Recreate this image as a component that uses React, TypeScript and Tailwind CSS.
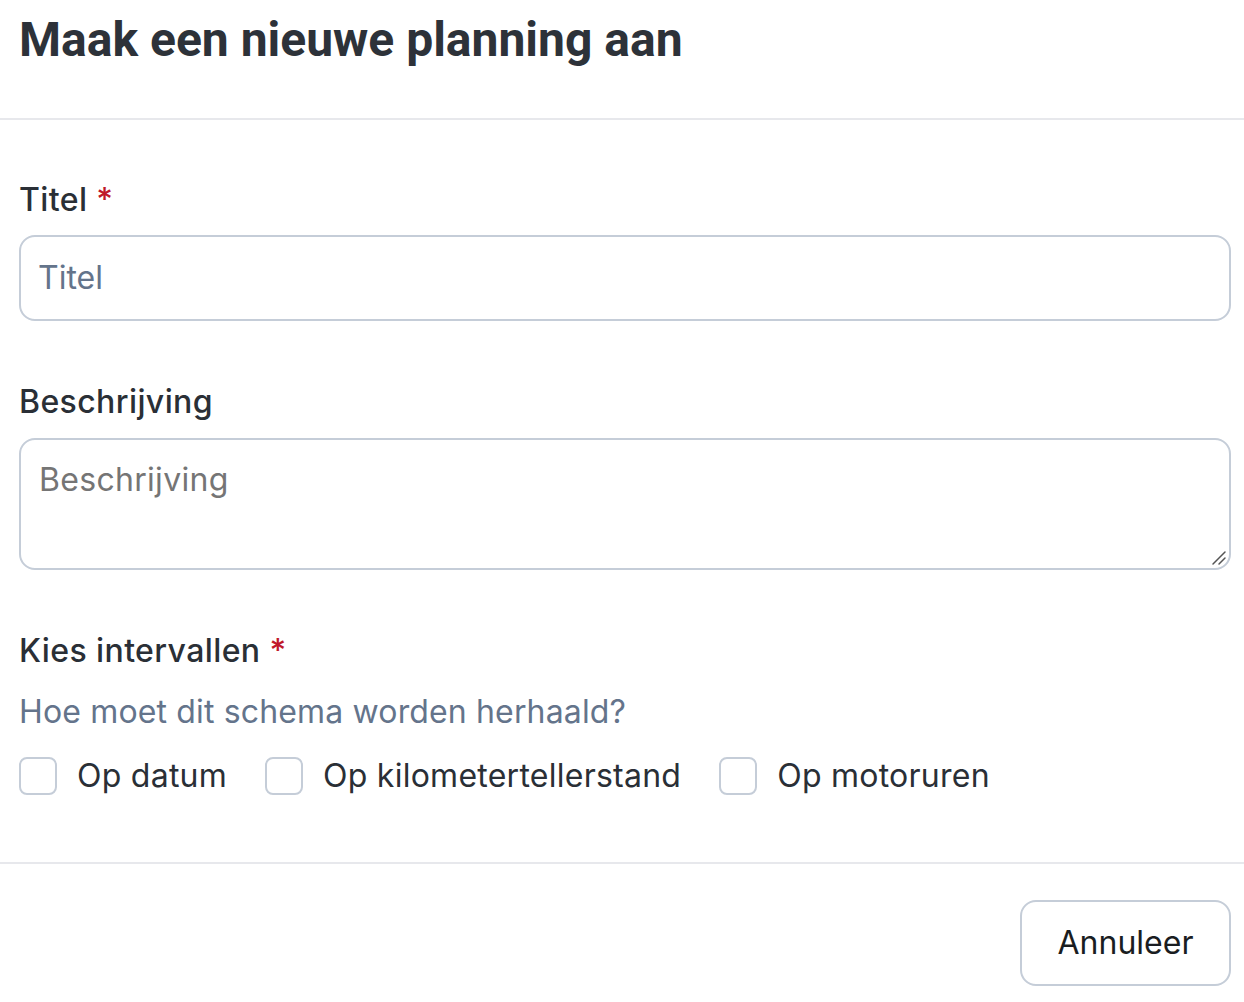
import React from 'react';

const Checkbox: React.FC<{ label: string }> = ({ label }) => (
  <label className="flex items-center gap-[20px]">
    <span className="block w-[38px] h-[38px] rounded-[8px] border-2 border-[#c5cdd8] bg-white" />
    <span className="text-[32px] leading-[40px] tracking-[0.25px] text-[#2a2f36]">{label}</span>
  </label>
);

export default function App() {
  return (
    <div className="w-[1244px] min-h-[1002px] bg-white font-['Inter','Liberation_Sans',sans-serif]">
      {/* HEADER */}
      <div className="pt-[12px] pb-[50px] pl-[19px] border-b-2 border-[#e7e8ec]">
        <h1 className="text-[48px] leading-[56px] font-bold text-[#2d3239] font-['Roboto','Inter',sans-serif]">
          Maak een nieuwe planning aan
        </h1>
      </div>

      {/* FORM */}
      <div className="pl-[19px] pr-[13px] pt-[60px] pb-[66px] flex flex-col">
        <div className="text-[32px] leading-[40px] font-medium tracking-[0.4px] text-[#2a2f36]">
          Titel <span className="text-[#c0182a]">*</span>
        </div>
        <div className="mt-[15px] h-[86px] rounded-[16px] border-2 border-[#c5cdd8] flex items-center px-[17px]">
          <span className="text-[32px] leading-[40px] text-[#64748b]">Titel</span>
        </div>

        <div className="mt-[61px] text-[32px] leading-[40px] font-medium tracking-[0.4px] text-[#2a2f36]">Beschrijving</div>
        <div className="relative mt-[16px] h-[132px] rounded-[16px] border-2 border-[#c5cdd8] px-[18px] pt-[20px]">
          <span className="text-[32px] leading-[40px] tracking-[0.3px] text-[#757575]">Beschrijving</span>
          <svg className="absolute right-[2px] bottom-[2px] w-[16px] h-[16px]" viewBox="0 0 16 16">
            <path d="M2 14 L14 2 M8 14 L14 8" stroke="#555" strokeWidth={1.5} strokeLinecap="round" />
          </svg>
        </div>

        <div className="mt-[61px] text-[32px] leading-[40px] font-medium tracking-[0.4px] text-[#2a2f36]">
          Kies intervallen <span className="text-[#c0182a]">*</span>
        </div>
        <div className="mt-[21px] text-[32px] leading-[40px] tracking-[0.15px] text-[#64748b]">
          Hoe moet dit schema worden herhaald?
        </div>
        <div className="mt-[24px] flex items-center gap-[38px]">
          <Checkbox label="Op datum" />
          <Checkbox label="Op kilometertellerstand" />
          <Checkbox label="Op motoruren" />
        </div>
      </div>

      {/* FOOTER */}
      <div className="border-t-2 border-[#e7e8ec] pt-[36px] pr-[13px] flex justify-end">
        <button className="w-[211px] h-[86px] rounded-[16px] border-2 border-[#c5cdd8] bg-white text-[32px] text-[#1a1d21]">
          Annuleer
        </button>
      </div>
    </div>
  );
}
